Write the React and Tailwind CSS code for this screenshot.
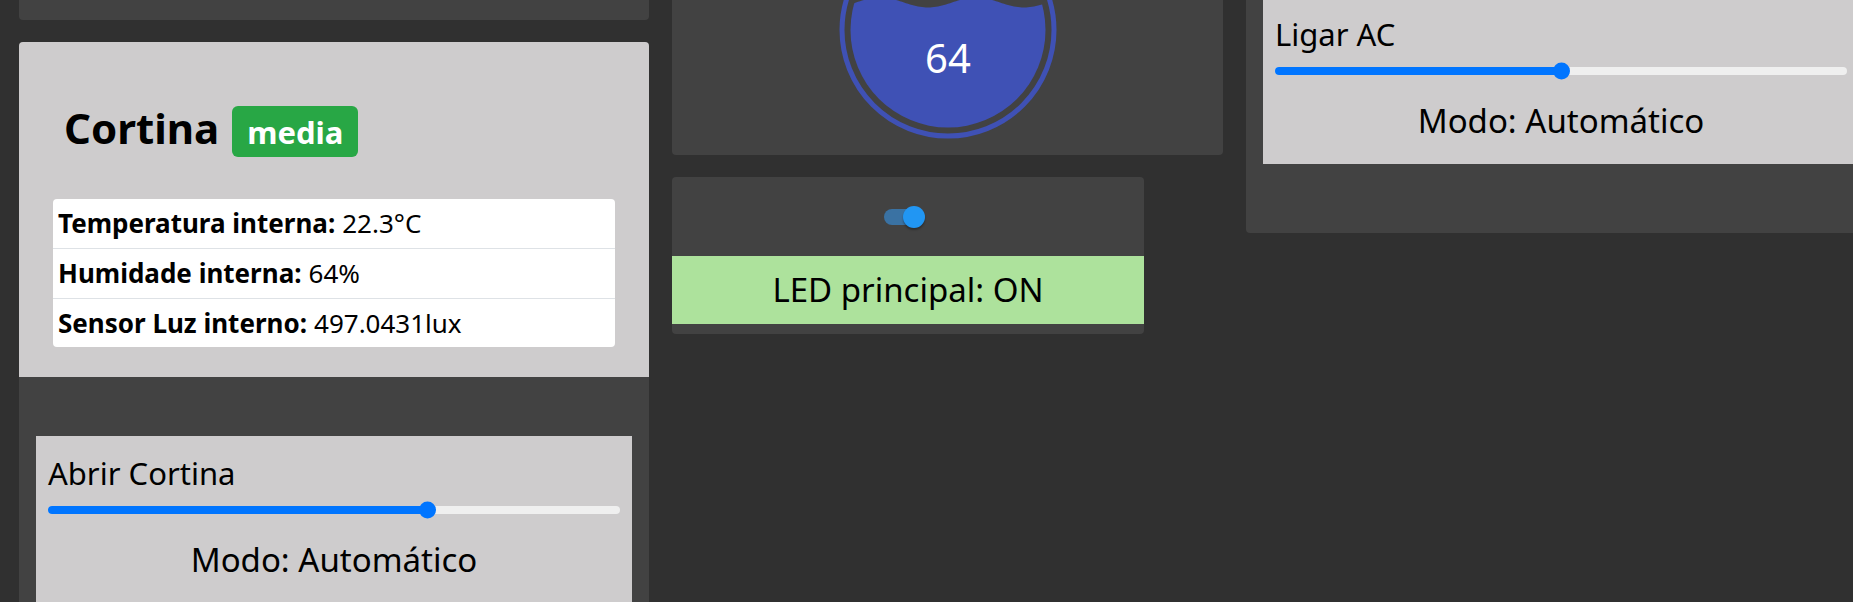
import React from "react"

const wavePath = (() => {
  // fill edge of the liquid gauge, svg coords (centre 110,110)
  let d = "M0 220 L0 " + (82.5 + 5 * Math.cos((2 * Math.PI * (0 - 90)) / 96)).toFixed(2)
  for (let x = 2; x <= 220; x += 2) {
    const y = 82.5 + 5 * Math.cos((2 * Math.PI * (x - 90)) / 96)
    d += " L" + x + " " + y.toFixed(2)
  }
  return d + " L220 220 Z"
})()

function Gauge({ value }) {
  return (
    <svg className="-mt-[80px] w-[220px] h-[220px] shrink-0" viewBox="0 0 220 220">
      <defs>
        <clipPath id="gaugeClip">
          <circle cx="110" cy="110" r="97.5" />
        </clipPath>
      </defs>
      <circle cx="110" cy="110" r="106" fill="none" stroke="#3f51b5" strokeWidth="5" />
      <path d={wavePath} fill="#3f51b5" clipPath="url(#gaugeClip)" />
      <text x="110" y="153" textAnchor="middle" fill="#ffffff" fontSize="40" fontFamily="Noto Sans, sans-serif">{value}</text>
    </svg>
  )
}

function Slider({ pct }) {
  return (
    <div className="relative mt-[7px] h-[17px] flex items-center">
      <div className="relative w-full h-[8px] rounded-full bg-[#efefef]">
        <div className="absolute left-0 top-0 h-full rounded-full bg-[#0075ff]" style={{ width: pct + "%" }} />
        <div className="absolute top-1/2 -translate-y-1/2 w-[17px] h-[17px] rounded-full bg-[#0075ff]" style={{ left: "calc(" + pct + "% - 8.5px)" }} />
      </div>
    </div>
  )
}

function ControlCard({ label, pct, className = "" }) {
  return (
    <div className={"mx-[17px] bg-[#cecccd] px-[12px] pt-[16px] pb-[21px] text-black " + className}>
      <p className="text-[31px] leading-[42px]">{label}</p>
      <Slider pct={pct} />
      <p className="mt-[19px] text-center text-[33px] leading-[45px]">Modo: Automático</p>
    </div>
  )
}

const rows = [
  ["Temperatura interna:", "22.3°C", "h-[49px]"],
  ["Humidade interna:", "64%", "h-[50px] border-t border-[#dee2e6]"],
  ["Sensor Luz interno:", "497.0431lux", "h-[49px] border-t border-[#dee2e6]"],
]

export default function App() {
  return (
    <div className="h-[602px] w-full overflow-hidden bg-[#303030] font-['Noto_Sans',sans-serif]">
      <div className="flex items-start gap-[23px] pl-[19px] w-max">
        {/* left column */}
        <div className="flex flex-col gap-[22px] w-[630px]">
          <div className="h-[20px] bg-[#424242] rounded-b-[4px]" />
          <div className="bg-[#424242] rounded-[4px] min-h-[600px]">
            <div className="bg-[#cecccd] rounded-t-[4px] px-[34px] pt-[64px] pb-[30px]">
              <div className="flex items-baseline pl-[11px]">
                <h2 className="text-[42px] font-bold leading-none text-black">Cortina</h2>
                <span className="ml-[13px] bg-[#28a745] text-white font-bold text-[31px] leading-none pt-[11px] pb-[9px] px-[15px] rounded-[6px]">media</span>
              </div>
              <div className="mt-[42px] bg-white rounded-[4px]">
                {rows.map(([k, v, h]) => (
                  <div key={k} className={"flex items-center pl-[5px] text-[26px] text-black " + h}>
                    <span className="font-bold">{k}</span>
                    <span className="ml-[7px]">{v}</span>
                  </div>
                ))}
              </div>
            </div>
            <div className="pt-[59px]">
              <ControlCard label="Abrir Cortina" pct={66.4} />
            </div>
          </div>
        </div>

        {/* middle column */}
        <div className="flex flex-col gap-[22px] w-[551px]">
          <div className="h-[155px] bg-[#424242] rounded-b-[4px] flex justify-center overflow-hidden">
            <Gauge value={64} />
          </div>
          <div className="w-[472px] h-[157px] bg-[#424242] rounded-[4px] overflow-hidden">
            <div className="h-[79px] flex items-center justify-center">
              <div className="relative -ml-[8px] w-[40px] h-[16px]">
                <div className="absolute inset-0 rounded-full bg-[#3a72a3]" />
                <div className="absolute right-[-1px] top-1/2 -translate-y-1/2 w-[22px] h-[22px] rounded-full bg-[#2196f3] shadow-[0_2px_2px_rgba(0,0,0,0.3)]" />
              </div>
            </div>
            <div className="h-[68px] bg-[#ade29c] flex items-center justify-center text-[33px] text-black">
              LED principal: ON
            </div>
          </div>
        </div>

        {/* right column */}
        <div className="w-[630px]">
          <div className="h-[233px] flex flex-col bg-[#424242] rounded-b-[4px]">
            <ControlCard label="Ligar AC" pct={50} className="-mt-[3px]" />
          </div>
        </div>
      </div>
    </div>
  )
}
